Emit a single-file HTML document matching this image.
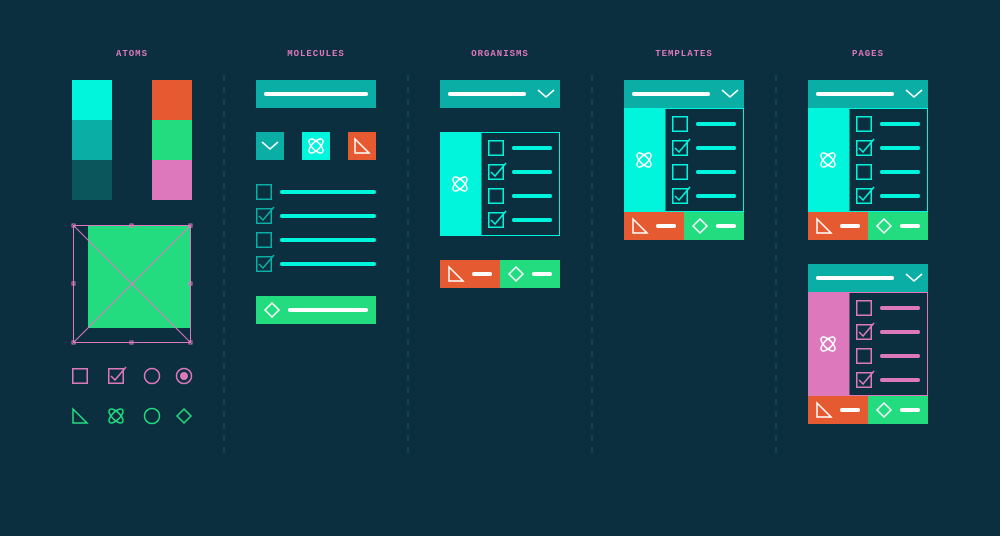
<!DOCTYPE html>
<html><head><meta charset="utf-8"><style>
html,body{margin:0;padding:0;background:#0b2f3f;}
svg{display:block}
text{font-family:"Liberation Mono",monospace;font-weight:bold;font-size:9px;fill:#de78bc;letter-spacing:1px}
</style></head><body>
<svg width="1000" height="536" viewBox="0 0 1000 536" xmlns="http://www.w3.org/2000/svg">
<defs>
<symbol id="box" viewBox="0 0 16 16" overflow="visible"><rect x="0.75" y="0.75" width="14.5" height="14.5" fill="none" stroke="currentColor" stroke-width="1.5"/></symbol>
<symbol id="chk" viewBox="0 0 16 16" overflow="visible"><rect x="0.75" y="0.75" width="14.5" height="14.5" fill="none" stroke="currentColor" stroke-width="1.5"/><path d="M3 8 L7 12 L18 -1" fill="none" stroke="currentColor" stroke-width="1.5"/></symbol>
<symbol id="atom" viewBox="0 0 16 16" overflow="visible"><g fill="none" stroke="currentColor" stroke-width="1.5"><ellipse cx="8" cy="8" rx="9" ry="4" transform="rotate(45 8 8)"/><ellipse cx="8" cy="8" rx="9" ry="4" transform="rotate(-45 8 8)"/></g></symbol>
<symbol id="tri" viewBox="0 0 16 16" overflow="visible"><path d="M1 1 L1 15 L15 15 Z" fill="none" stroke="currentColor" stroke-width="1.5"/></symbol>
<symbol id="dia" viewBox="0 0 16 16" overflow="visible"><path d="M8 1 L15 8 L8 15 L1 8 Z" fill="none" stroke="currentColor" stroke-width="1.5"/></symbol>
<symbol id="chev" viewBox="0 0 16 16" overflow="visible"><path d="M0 4 L8 11 L16 4" fill="none" stroke="currentColor" stroke-width="1.5"/></symbol>
<g id="dd"><rect width="120" height="28" fill="#0aaea4"/><line x1="10" y1="14" x2="84" y2="14" stroke="#fff" stroke-width="4" stroke-linecap="round"/><use href="#chev" x="98" y="6" width="16" height="16" color="#fff"/></g>
<g id="btns"><rect width="60" height="28" fill="#e55a30"/><rect x="60" width="60" height="28" fill="#24dc80"/><use href="#tri" x="8" y="6" width="16" height="16" color="#fff"/><line x1="34" y1="14" x2="50" y2="14" stroke="#fff" stroke-width="4" stroke-linecap="round"/><use href="#dia" x="68" y="6" width="16" height="16" color="#fff"/><line x1="94" y1="14" x2="110" y2="14" stroke="#fff" stroke-width="4" stroke-linecap="round"/></g>
</defs>
<g stroke="#11444f" stroke-width="2" stroke-dasharray="6 6"><line x1="224" y1="75" x2="224" y2="456"/><line x1="408" y1="75" x2="408" y2="456"/><line x1="592" y1="75" x2="592" y2="456"/><line x1="776" y1="75" x2="776" y2="456"/></g>
<text x="132" y="56" text-anchor="middle">ATOMS</text>
<text x="316" y="56" text-anchor="middle">MOLECULES</text>
<text x="500" y="56" text-anchor="middle">ORGANISMS</text>
<text x="684" y="56" text-anchor="middle">TEMPLATES</text>
<text x="868" y="56" text-anchor="middle">PAGES</text>
<!-- atoms -->
<rect x="72" y="80" width="40" height="40" fill="#00f5dc"/><rect x="72" y="120" width="40" height="40" fill="#0aaea4"/><rect x="72" y="160" width="40" height="40" fill="#0b555c"/>
<rect x="152" y="80" width="40" height="40" fill="#e55a30"/><rect x="152" y="120" width="40" height="40" fill="#24dc80"/><rect x="152" y="160" width="40" height="40" fill="#de78bc"/>
<rect x="88" y="225" width="102" height="103" fill="#24dc80"/>
<g stroke="#de78bc" stroke-width="1" fill="none"><rect x="73.5" y="225.5" width="117" height="117"/><line x1="73.5" y1="225.5" x2="190.5" y2="342.5"/><line x1="190.5" y1="225.5" x2="73.5" y2="342.5"/>
<rect x="72" y="224" width="3" height="3"/><rect x="130" y="224" width="3" height="3"/><rect x="189" y="224" width="3" height="3"/><rect x="72" y="282" width="3" height="3"/><rect x="189" y="282" width="3" height="3"/><rect x="72" y="341" width="3" height="3"/><rect x="130" y="341" width="3" height="3"/><rect x="189" y="341" width="3" height="3"/></g>
<use href="#box" x="72" y="368" width="16" height="16" color="#de78bc"/>
<use href="#chk" x="108" y="368" width="16" height="16" color="#de78bc"/>
<circle cx="152" cy="376" r="7.5" fill="none" stroke="#de78bc" stroke-width="1.5"/>
<circle cx="184" cy="376" r="7.5" fill="none" stroke="#de78bc" stroke-width="1.5"/><circle cx="184" cy="376" r="4" fill="#de78bc"/>
<use href="#tri" x="72" y="408" width="16" height="16" color="#24dc80"/>
<use href="#atom" x="108" y="408" width="16" height="16" color="#24dc80"/>
<circle cx="152" cy="416" r="7.5" fill="none" stroke="#24dc80" stroke-width="1.5"/>
<use href="#dia" x="176" y="408" width="16" height="16" color="#24dc80"/>
<!-- molecules -->
<rect x="256" y="80" width="120" height="28" fill="#0aaea4"/><line x1="266" y1="94" x2="366" y2="94" stroke="#fff" stroke-width="4" stroke-linecap="round"/>
<rect x="256" y="132" width="28" height="28" fill="#0aaea4"/><use href="#chev" x="262" y="138" width="16" height="16" color="#fff"/>
<rect x="302" y="132" width="28" height="28" fill="#00f5dc"/><use href="#atom" x="308" y="138" width="16" height="16" color="#fff"/>
<rect x="348" y="132" width="28" height="28" fill="#e55a30"/><use href="#tri" x="354" y="138" width="16" height="16" color="#fff"/>
<g color="#0aaea4"><use href="#box" x="256" y="184" width="16" height="16"/><use href="#chk" x="256" y="208" width="16" height="16"/><use href="#box" x="256" y="232" width="16" height="16"/><use href="#chk" x="256" y="256" width="16" height="16"/></g>
<g stroke="#00f5dc" stroke-width="4" stroke-linecap="round"><line x1="282" y1="192" x2="374" y2="192"/><line x1="282" y1="216" x2="374" y2="216"/><line x1="282" y1="240" x2="374" y2="240"/><line x1="282" y1="264" x2="374" y2="264"/></g>
<rect x="256" y="296" width="120" height="28" fill="#24dc80"/><use href="#dia" x="264" y="302" width="16" height="16" color="#fff"/><line x1="290" y1="310" x2="366" y2="310" stroke="#fff" stroke-width="4" stroke-linecap="round"/>
<!-- organisms -->
<use href="#dd" x="440" y="80"/>
<g transform="translate(440,132)"><rect width="41" height="104" fill="#00f5dc"/><rect x="41" y="0.5" width="78.5" height="103" fill="none" stroke="#00f5dc"/><use href="#atom" x="12" y="44" width="16" height="16" color="#fff"/>
<g color="#00f5dc"><use href="#box" x="48" y="8" width="16" height="16"/><use href="#chk" x="48" y="32" width="16" height="16"/><use href="#box" x="48" y="56" width="16" height="16"/><use href="#chk" x="48" y="80" width="16" height="16"/></g>
<g stroke="#00f5dc" stroke-width="4" stroke-linecap="round"><line x1="74" y1="16" x2="110" y2="16"/><line x1="74" y1="40" x2="110" y2="40"/><line x1="74" y1="64" x2="110" y2="64"/><line x1="74" y1="88" x2="110" y2="88"/></g></g>
<use href="#btns" x="440" y="260"/>
<!-- templates -->
<use href="#dd" x="624" y="80"/>
<g transform="translate(624,108)"><rect width="41" height="104" fill="#00f5dc"/><rect x="41" y="0.5" width="78.5" height="103" fill="none" stroke="#00f5dc"/><use href="#atom" x="12" y="44" width="16" height="16" color="#fff"/>
<g color="#00f5dc"><use href="#box" x="48" y="8" width="16" height="16"/><use href="#chk" x="48" y="32" width="16" height="16"/><use href="#box" x="48" y="56" width="16" height="16"/><use href="#chk" x="48" y="80" width="16" height="16"/></g>
<g stroke="#00f5dc" stroke-width="4" stroke-linecap="round"><line x1="74" y1="16" x2="110" y2="16"/><line x1="74" y1="40" x2="110" y2="40"/><line x1="74" y1="64" x2="110" y2="64"/><line x1="74" y1="88" x2="110" y2="88"/></g></g>
<use href="#btns" x="624" y="212"/>
<!-- pages -->
<use href="#dd" x="808" y="80"/>
<g transform="translate(808,108)"><rect width="41" height="104" fill="#00f5dc"/><rect x="41" y="0.5" width="78.5" height="103" fill="none" stroke="#00f5dc"/><use href="#atom" x="12" y="44" width="16" height="16" color="#fff"/>
<g color="#00f5dc"><use href="#box" x="48" y="8" width="16" height="16"/><use href="#chk" x="48" y="32" width="16" height="16"/><use href="#box" x="48" y="56" width="16" height="16"/><use href="#chk" x="48" y="80" width="16" height="16"/></g>
<g stroke="#00f5dc" stroke-width="4" stroke-linecap="round"><line x1="74" y1="16" x2="110" y2="16"/><line x1="74" y1="40" x2="110" y2="40"/><line x1="74" y1="64" x2="110" y2="64"/><line x1="74" y1="88" x2="110" y2="88"/></g></g>
<use href="#btns" x="808" y="212"/>
<use href="#dd" x="808" y="264"/>
<g transform="translate(808,292)"><rect width="41" height="104" fill="#de78bc"/><rect x="41" y="0.5" width="78.5" height="103" fill="none" stroke="#de78bc"/><use href="#atom" x="12" y="44" width="16" height="16" color="#fff"/>
<g color="#de78bc"><use href="#box" x="48" y="8" width="16" height="16"/><use href="#chk" x="48" y="32" width="16" height="16"/><use href="#box" x="48" y="56" width="16" height="16"/><use href="#chk" x="48" y="80" width="16" height="16"/></g>
<g stroke="#de78bc" stroke-width="4" stroke-linecap="round"><line x1="74" y1="16" x2="110" y2="16"/><line x1="74" y1="40" x2="110" y2="40"/><line x1="74" y1="64" x2="110" y2="64"/><line x1="74" y1="88" x2="110" y2="88"/></g></g>
<use href="#btns" x="808" y="396"/>
</svg>
</body></html>
